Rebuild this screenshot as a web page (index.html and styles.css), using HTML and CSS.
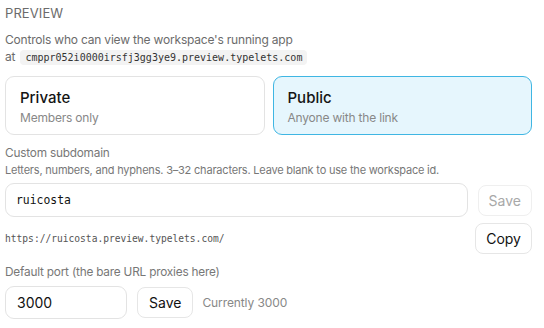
FILE: index.html
```html
<!DOCTYPE html>
<html lang="en">

<head>
    <meta charset="utf-8">
    <title>Preview settings</title>
    <link rel="stylesheet" href="styles.css">
</head>

<body>
    <div class="panel">
        <div class="heading">PREVIEW</div>
        <p class="intro">Controls who can view the workspace's running app<br>
            at <code class="host">cmppr052i0000irsfj3gg3ye9.preview.typelets.com</code></p>

        <div class="choices">
            <div class="choice">
                <div class="choice-title">Private</div>
                <div class="choice-sub">Members only</div>
            </div>
            <div class="choice active">
                <div class="choice-title">Public</div>
                <div class="choice-sub">Anyone with the link</div>
            </div>
        </div>

        <div class="label">Custom subdomain</div>
        <div class="hint">Letters, numbers, and hyphens. 3–32 characters. Leave blank to use the workspace id.</div>
        <div class="row sub-row">
            <input class="field mono" type="text" value="ruicosta">
            <button class="btn disabled">Save</button>
        </div>
        <div class="row url-row">
            <span class="url">https://ruicosta.preview.typelets.com/</span>
            <button class="btn">Copy</button>
        </div>

        <div class="label port-label">Default port (the bare URL proxies here)</div>
        <div class="row port-row">
            <input class="field port" type="text" value="3000">
            <button class="btn">Save</button>
            <span class="current">Currently 3000</span>
        </div>
    </div>
</body>

</html>
```

FILE: styles.css
```css
body {
    margin: 0;
    background: #ffffff;
    font-family: Inter, "Noto Sans", sans-serif;
    color: #1a1a1a;
}

.panel {
    padding: 4px 12px 0 5px;
}

.heading {
    font-size: 13px;
    line-height: 18px;
    color: #6b6b6b;
    letter-spacing: 0.1px;
}

.intro {
    margin: 10px 0 0;
    font-size: 12px;
    line-height: 16.5px;
    letter-spacing: -0.2px;
    color: #6b6b6b;
}

.host {
    display: inline-block;
    margin-left: 2px;
    padding: 0 5px;
    background: #f3f3f3;
    border-radius: 4px;
    font-family: "DejaVu Sans Mono", monospace;
    font-size: 10px;
    line-height: 15px;
    letter-spacing: 0;
    color: #333;
}

.choices {
    display: flex;
    gap: 8px;
    margin-top: 11px;
}

.choice {
    flex: 1;
    height: 59px;
    box-sizing: border-box;
    padding: 12px 14px;
    border: 1px solid #e3e3e3;
    border-radius: 9px;
}

.choice.active {
    background: #e6f6fd;
    border-color: #3fb6e3;
}

.choice-title {
    font-size: 15px;
    line-height: 18px;
    font-weight: 500;
    color: #141414;
}

.choice-sub {
    margin-top: 3px;
    font-size: 12px;
    line-height: 16px;
    letter-spacing: -0.2px;
    color: #888;
}

.label {
    margin-top: 10px;
    font-size: 11.8px;
    line-height: 16px;
    letter-spacing: -0.2px;
    color: #777;
}

.hint {
    margin-top: 2px;
    font-size: 11px;
    line-height: 15px;
    letter-spacing: -0.2px;
    color: #777;
}

.row {
    display: flex;
    align-items: center;
    gap: 10px;
}

.sub-row {
    margin-top: 5px;
}

.field {
    height: 34px;
    box-sizing: border-box;
    border: 1px solid #e3e3e3;
    border-radius: 9px;
    padding: 0 10px;
    font-family: Inter, sans-serif;
    font-size: 14px;
    color: #111;
    outline: none;
    background: #fff;
}

.field.mono {
    flex: 1;
    font-family: "DejaVu Sans Mono", monospace;
    font-size: 11.4px;
}

.btn {
    height: 31px;
    box-sizing: border-box;
    padding: 0 10px;
    border: 1px solid #e6e6e6;
    border-radius: 8px;
    background: #fff;
    font-family: Inter, sans-serif;
    font-size: 14px;
    color: #111;
}

.btn.disabled {
    color: #a8a8a8;
    border-color: #efefef;
}

.url-row {
    justify-content: space-between;
    margin-top: 6px;
}

.url {
    font-family: "DejaVu Sans Mono", monospace;
    font-size: 9.6px;
    color: #555;
}

.port-label {
    margin-top: 10px;
}

.port-row {
    margin-top: 6px;
}

.field.port {
    width: 122px;
    height: 33px;
    padding: 0 11px;
}

.port-row .btn {
    padding: 0 11px;
}

.current {
    margin-left: -1px;
    font-size: 12px;
    letter-spacing: -0.1px;
    color: #888;
}
```
